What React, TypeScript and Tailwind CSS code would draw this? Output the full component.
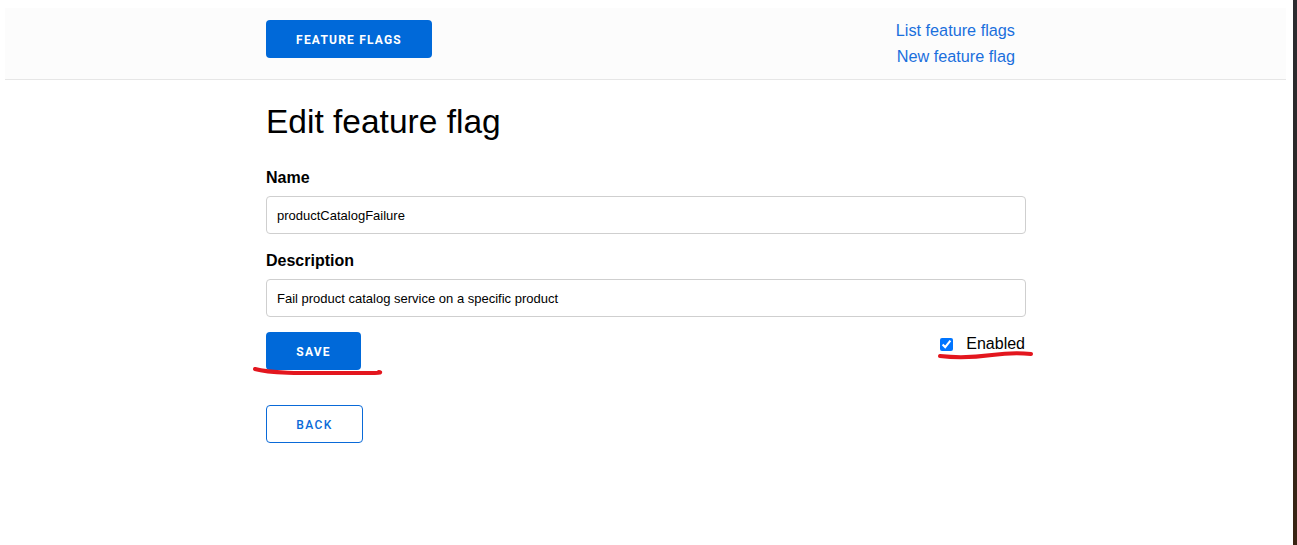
import { useState } from "react";

const font = { fontFamily: '"Liberation Sans", Arial, sans-serif' };
const btnFont = { fontFamily: 'Roboto, "Liberation Sans", Arial, sans-serif' };

function Scribble({ d, w, h }: { d: string; w: number; h: number }) {
  return (
    <svg
      width={w}
      height={h}
      viewBox={`0 0 ${w} ${h}`}
      className="pointer-events-none absolute"
      fill="none"
    >
      <path d={d} stroke="#e3161e" strokeWidth={4} strokeLinecap="round" />
    </svg>
  );
}

export default function App() {
  const [name, setName] = useState("productCatalogFailure");
  const [description, setDescription] = useState(
    "Fail product catalog service on a specific product"
  );
  const [enabled, setEnabled] = useState(true);

  return (
    <div className="flex min-h-[545px] w-full bg-white text-black" style={font}>
      <div className="flex flex-1 flex-col">
        <header className="ml-[5px] mr-[7px] mt-[8px] h-[72px] border-b border-[#e6e6e6] bg-[#fcfcfc]">
          <div className="ml-[261px] flex w-[760px] items-start justify-between pt-[12px]">
            <button
              className="h-[38px] w-[166px] rounded-[4px] bg-[#0069d9] pt-[2px] text-[12px] font-bold tracking-[0.1em] text-white"
              style={btnFont}
            >
              FEATURE FLAGS
            </button>
            <nav className="-mt-[3px] flex flex-col items-end pr-[11px] text-[16.25px] leading-[26px] text-[#1a6fdc]">
              <a href="#">List feature flags</a>
              <a href="#">New feature flag</a>
            </nav>
          </div>
        </header>

        <main className="ml-[266px] w-[760px]">
          <h1 className="mt-[22px] text-[33.5px] leading-[40px] font-normal">
            Edit feature flag
          </h1>

          <label className="mt-[24px] block text-[16px] font-bold leading-[24px]">
            Name
          </label>
          <input
            value={name}
            onChange={(e) => setName(e.target.value)}
            className="mt-[6px] block h-[38px] w-full rounded-[4px] border border-[#cfcfcf] px-[10px] text-[13px] outline-none"
          />

          <label className="mt-[15px] block text-[16px] font-bold leading-[24px]">
            Description
          </label>
          <input
            value={description}
            onChange={(e) => setDescription(e.target.value)}
            className="mt-[6px] block h-[38px] w-full rounded-[4px] border border-[#cfcfcf] px-[10px] text-[13px] outline-none"
          />

          <div className="mt-[15px] flex items-start justify-between">
            <div className="relative">
              <button
                className="h-[38px] w-[95px] rounded-[4px] bg-[#0069d9] pt-[1px] text-[12px] font-bold tracking-[0.1em] text-white"
                style={btnFont}
              >
                SAVE
              </button>
              <div className="absolute left-[-14px] top-[34px]">
                <Scribble w={132} h={12} d="M3 3 C 20 8, 60 7, 100 7 S 125 6, 127 6" />
              </div>
            </div>
            <div className="relative mr-[1px] mt-[5px] flex items-center">
              <input
                type="checkbox"
                checked={enabled}
                onChange={(e) => setEnabled(e.target.checked)}
                className="m-0 h-[13px] w-[13px] accent-[#0075ff]"
              />
              <span className="ml-[13px] text-[16px] leading-[14px]">Enabled</span>
              <div className="absolute left-[-3px] top-[13px]">
                <Scribble w={98} h={10} d="M3 6 C 20 8, 40 7, 55 5 S 85 3, 94 4" />
              </div>
            </div>
          </div>

          <button
            className="mt-[35px] h-[38px] w-[97px] rounded-[4px] border-[1.5px] border-[#0a6ad8] pt-[1px] text-[12px] font-medium tracking-[0.12em] text-[#0a6ad8]"
            style={btnFont}
          >
            BACK
          </button>
        </main>
      </div>
      <div className="w-[4px] bg-gradient-to-b from-[#2c2c30] via-[#2a2624] to-[#3a2412]" />
    </div>
  );
}
